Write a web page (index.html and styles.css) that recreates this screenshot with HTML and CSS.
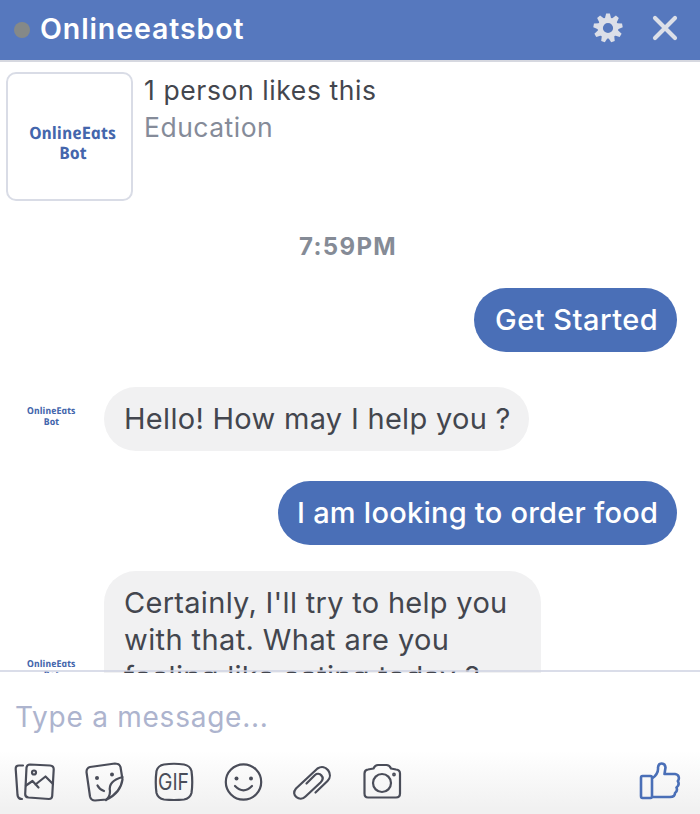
FILE: index.html
```html
<!DOCTYPE html>
<html lang="en">
<head>
<meta charset="utf-8">
<title>Onlineeatsbot</title>
<link rel="stylesheet" href="styles.css">
</head>
<body>
<div class="chat">
  <header class="header">
    <span class="status"></span>
    <h1 class="title"><span>Onlineeatsbot</span></h1>
    <svg class="gear" width="30" height="30" viewBox="-15 -15 30 30">
      <g fill="#dcdfe8">
        <path id="tooth" d="M-3.2-9L-1.9-14.6H1.9L3.2-9Z"/>
        <use href="#tooth" transform="rotate(40)"/>
        <use href="#tooth" transform="rotate(80)"/>
        <use href="#tooth" transform="rotate(120)"/>
        <use href="#tooth" transform="rotate(160)"/>
        <use href="#tooth" transform="rotate(200)"/>
        <use href="#tooth" transform="rotate(240)"/>
        <use href="#tooth" transform="rotate(280)"/>
        <use href="#tooth" transform="rotate(320)"/>
      </g>
      <circle r="7.8" fill="none" stroke="#dcdfe8" stroke-width="5.4"/>
    </svg>
    <svg class="close" width="26" height="26" viewBox="0 0 26 26" fill="none" stroke="#dcdfe8" stroke-width="4.2" stroke-linecap="round"><path d="M3 3L23 23M23 3L3 23"/></svg>
  </header>

  <main class="messages">
    <section class="page-info">
      <div class="page-logo"><div class="logo">OnlineEats<br><span class="logo-bot">Bot</span></div></div>
      <div class="page-text">
        <div class="likes"><span>1 person likes this</span></div>
        <div class="category"><span>Education</span></div>
      </div>
    </section>
    <div class="time"><span>7:59PM</span></div>
    <div class="row sent first"><div class="bubble"><span class="t-start">Get Started</span></div></div>
    <div class="row received hello">
      <div class="avatar"><div class="logo small">OnlineEats<br><span class="logo-bot">Bot</span></div></div>
      <div class="bubble"><span class="t-hello">Hello! How may I help you ?</span></div>
    </div>
    <div class="row sent order"><div class="bubble"><span class="t-order">I am looking to order food</span></div></div>
    <div class="row received certainly">
      <div class="avatar"><div class="logo small">OnlineEats<br><span class="logo-bot">Bot</span></div></div>
      <div class="bubble tall"><span class="t-c1">Certainly, I'll try to help you</span><br><span class="t-c2">with that. What are you</span><br><span class="t-c3">feeling like eating today ?</span></div>
    </div>
  </main>

  <footer class="composer">
    <div class="placeholder"><span>Type a message...</span></div>
    <div class="tools">
      <svg width="42" height="42" viewBox="0 0 42 42"><path d="M9 4.500H5Q1.500 4.500 1.700 8L3.500 34Q4 38 8 38"/><path d="M16 3.500L36 4.500Q40 5 39.700 8.500L38.200 35Q38 38 35 38L14.500 36.500Q11 36 11.200 33L12.500 6.500Q13 3.500 16 3.500Z"/><circle cx="20" cy="11.500" r="2"/><path d="M12 24.500L18.500 20L24.500 26.500M21.500 23.500L31.500 15.500L39 23"/></svg>
      <svg width="42" height="42" viewBox="0 0 42 42"><path d="M6 6L31 2.500Q35.500 2.500 36.500 6L38.500 18.500Q36.500 32 22.500 38.500L11 39.500Q7 39.500 6 35.500L2.500 11Q2.500 7 6 6Z"/><path d="M38.500 16Q24 20 26 30Q26 36 22 39"/><path d="M13.500 24.500Q15.500 28.500 20 30"/><g class="dot"><circle cx="13" cy="17" r="2"/><circle cx="28" cy="13.500" r="2"/></g></svg>
      <svg width="42" height="42" viewBox="0 0 42 42"><path d="M11 3.500Q21 2 31 3.500Q37 4.500 38.500 10Q40 21.500 38.500 32Q37 37.500 31 38.500Q21 39.500 11 38.500Q5 37.500 3.500 32Q2 21.500 3.500 10Q5 4.500 11 3.500Z"/><text x="20.500" y="29" text-anchor="middle" textLength="31" lengthAdjust="spacingAndGlyphs">GIF</text></svg>
      <svg width="42" height="42" viewBox="0 0 42 42"><circle cx="20.500" cy="21" r="17.700"/><path d="M12 25Q20.500 33.500 29 25"/><g class="dot"><circle cx="13.500" cy="17.500" r="2"/><circle cx="28" cy="17.500" r="2"/></g></svg>
      <svg width="42" height="42" viewBox="0 0 42 42"><path d="M23.500 31.500L35.500 20C42 13.500 34 2 25.500 7.500L4 27.500C-2 34.500 8 41 13.500 35.500L28.500 21.500C34 16 27 10.500 23 14L14.500 22.500"/></svg>
      <svg width="42" height="42" viewBox="0 0 42 42"><path d="M6 8.500L11.500 7.500Q13 4 16 4H24.500Q27.500 4 29 7.500L34 8.500Q38 9 38 12.500V32.500Q38 36.500 34 36.500H6Q2.500 36.500 2.500 32.500V12.500Q2.500 9 6 8.500Z"/><circle cx="20" cy="22" r="9"/><circle cx="32" cy="13.500" r=".8"/></svg>
      <svg class="like" width="42" height="42" viewBox="0 0 42 42"><path d="M3.500 15H11.500Q13 15 13 17V35Q13 37 11.500 37H3.500Q2 37 2 35V17Q2 15 3.500 15ZM13 17.500C16.500 15 19.500 11 19 6.500C19.500 1 26 1.500 26.500 6.500L25.500 13H36C40.500 13.500 40.500 18 38.800 20C40.500 23 39.500 25 37.500 26.500C38.500 29 37.500 31 36 32C36 34.500 34 36 31 36H13Z"/></svg>
    </div>
  </footer>
</div>
</body>
</html>
```

FILE: styles.css
```css
* { box-sizing: border-box; }
body { margin: 0; font-family: Inter, "Liberation Sans", sans-serif; color: #43464e; }
.chat { width: 700px; height: 814px; display: flex; flex-direction: column; overflow: hidden; background: #fff; }
.header { flex: none; height: 62px; display: flex; align-items: center; padding: 0 22px 4px 14px; background: #5678be; border-bottom: 2px solid #d6d8e0; }
.status { width: 16px; height: 16px; margin-top: 3px; border-radius: 50%; background: #858988; }
.title { flex: 1; margin: 2px 0 0 10px; font-size: 28.500px; font-weight: 600; letter-spacing: .9px; color: #fff; line-height: 36px; }
.gear { margin: 0 29px 0 0; }
.close { margin-bottom: 1px; }
.messages { flex: none; position: relative; height: 611px; overflow: hidden; }
.messages::after { content: ""; position: absolute; left: 0; right: 0; bottom: 1px; height: 2px; background: rgba(205, 209, 225, .75); }
.page-info { display: flex; height: 139px; padding: 10px 0 0 6px; }
.page-logo { width: 127px; height: 129px; border: 2px solid #d9dce6; border-radius: 10px; display: flex; align-items: center; justify-content: center; padding: 12px 0 0 9px; }
.logo { font-family: "Open Sans", sans-serif; font-style: italic; font-weight: 700; font-size: 17px; line-height: 20px; text-align: center; color: #4466ac; transform: skewX(12deg); white-space: nowrap; }
.logo.small { font-size: 9.500px; line-height: 11px; }
.logo-bot { margin-right: .45em; }
.page-text { padding-left: 11px; font-size: 26.500px; line-height: 37px; letter-spacing: .6px; }
.category { color: #858b99; letter-spacing: .5px; }
.time { height: 26px; margin-top: 33px; text-align: center; font-size: 24px; line-height: 26px; font-weight: 700; letter-spacing: 1.300px; color: #858b96; padding-right: 4px; }
.row { display: flex; }
.bubble { height: 64px; border-radius: 32px; padding: 13px 20px; font-size: 29px; line-height: 37px; white-space: nowrap; }
.sent { justify-content: flex-end; padding-right: 23px; }
.sent .bubble { background: #4a6fb7; color: #fff; font-weight: 500; }
.received .bubble { background: #f1f1f2; }
.first { margin-top: 28px; }
.first .bubble { width: 203px; padding-left: 21px; letter-spacing: .5px; }
.hello { margin-top: 35px; }
.hello .bubble { width: 425px; letter-spacing: .3px; }
.order { margin-top: 30px; }
.order .bubble { width: 399px; padding-left: 19px; letter-spacing: .25px; }
.certainly { margin-top: 26px; }
.bubble.tall { width: 437px; height: 140px; letter-spacing: .3px; }
.t-c2 { letter-spacing: .4px; }
.avatar { width: 104px; padding: 18px 0 0 1px; display: flex; justify-content: center; align-items: flex-start; }
.certainly .avatar { padding-top: 87px; }
.composer { flex: none; height: 141px; background: linear-gradient(#fff 55%, #f1f1f1 96%); }
.placeholder { height: 88px; padding: 25px 0 0 15px; font-size: 28px; line-height: 38px; letter-spacing: .75px; color: #adb4ce; }
.tools { display: flex; gap: 27.500px; padding: 0 19px 0 14px; }
.tools svg { fill: none; stroke: #4a4d59; stroke-width: 2.200; stroke-linecap: round; stroke-linejoin: round; }
.tools .dot { fill: #4a4d59; stroke: none; }
.tools text { fill: #4a4d59; stroke: none; font-size: 23px; font-weight: 400; }
.tools .like { margin-left: auto; stroke: #4a6fb7; stroke-width: 2.600; }
```
